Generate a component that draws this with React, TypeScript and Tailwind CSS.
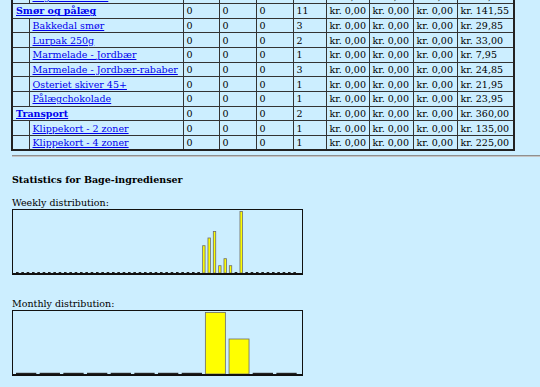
import React from "react"

type Row = {
  name: string
  cat?: boolean
  counts: number[]
  total: string
}

const rows: Row[] = [
  { name: "Yoghurt naturel", counts: [0, 0, 0, 1], total: "kr. 12,95" },
  { name: "Smør og pålæg", cat: true, counts: [0, 0, 0, 11], total: "kr. 141,55" },
  { name: "Bakkedal smør", counts: [0, 0, 0, 3], total: "kr. 29,85" },
  { name: "Lurpak 250g", counts: [0, 0, 0, 2], total: "kr. 33,00" },
  { name: "Marmelade - Jordbær", counts: [0, 0, 0, 1], total: "kr. 7,95" },
  { name: "Marmelade - Jordbær-rababer", counts: [0, 0, 0, 3], total: "kr. 24,85" },
  { name: "Osteriet skiver 45+", counts: [0, 0, 0, 1], total: "kr. 21,95" },
  { name: "Pålægchokolade", counts: [0, 0, 0, 1], total: "kr. 23,95" },
  { name: "Transport", cat: true, counts: [0, 0, 0, 2], total: "kr. 360,00" },
  { name: "Klippekort - 2 zoner", counts: [0, 0, 0, 1], total: "kr. 135,00" },
  { name: "Klippekort - 4 zoner", counts: [0, 0, 0, 1], total: "kr. 225,00" },
]

// weekly values as bar heights in px (index = week)
const weekly: Record<number, number> = { 35: 27.3, 36: 35, 37: 41.6, 38: 7.3, 39: 14.3, 40: 7.3, 42: 61.6 }
const monthly: Record<number, number> = { 8: 61.6, 9: 35 }

const cell = "border border-[#333] h-[14.67px] py-0 pl-[3px] pr-[2px] align-middle whitespace-nowrap"

function WeeklyChart() {
  return (
    <div className="w-[291px] h-[66px] border border-b-2 border-[#111]">
      <svg width="289" height="63" viewBox="0 0 289 63">
        {Array.from({ length: 53 }).map((_, i) => {
          const h = weekly[i] ?? 0
          const x = 3 + i * 5.333
          return h > 0 ? (
            <rect key={i} x={x} y={63 - h} width={2.4} height={h} fill="#ffff00" stroke="#6b6b6b" strokeWidth={0.8} />
          ) : (
            <rect key={i} x={x} y={62} width={2.6} height={1} fill="#222" />
          )
        })}
      </svg>
    </div>
  )
}

function MonthlyChart() {
  return (
    <div className="w-[291px] h-[66px] border border-b-2 border-[#111]">
      <svg width="289" height="63" viewBox="0 0 289 63">
        {Array.from({ length: 12 }).map((_, i) => {
          const h = monthly[i] ?? 0
          const x = 3 + i * 23.67
          return h > 0 ? (
            <rect key={i} x={x} y={63 - h} width={20} height={h} fill="#ffff00" stroke="#6b6b6b" strokeWidth={0.8} />
          ) : (
            <rect key={i} x={x} y={61.8} width={20.3} height={1.2} fill="#222" />
          )
        })}
      </svg>
    </div>
  )
}

export default function App() {
  return (
    <div className="w-[540px] h-[387px] overflow-hidden bg-[#cceeff] text-black text-[9.5px] leading-[11px] font-['DejaVu_Serif',serif]">
      <div className="pl-[12px]">
        <table className="-mt-[12px] -ml-[1px] w-[502px] table-fixed border-collapse border-2 border-[#222]">
          <colgroup>
            <col className="w-[17px]" />
            <col className="w-[154px]" />
            <col className="w-[36px]" />
            <col className="w-[37px]" />
            <col className="w-[37px]" />
            <col className="w-[33px]" />
            <col className="w-[43px]" />
            <col className="w-[44px]" />
            <col className="w-[44px]" />
            <col className="w-[57px]" />
          </colgroup>
          <tbody>
            {rows.map((r) => (
              <tr key={r.name}>
                {r.cat ? (
                  <td colSpan={2} className={cell}>
                    <a href="#" className="font-bold text-[#0000ee] underline">{r.name}</a>
                  </td>
                ) : (
                  <>
                    <td className={cell}></td>
                    <td className={cell}>
                      <a href="#" className="text-[#0000ee] underline">{r.name}</a>
                    </td>
                  </>
                )}
                {r.counts.map((c, i) => (
                  <td key={i} className={cell}>{c}</td>
                ))}
                <td className={cell}>kr. 0,00</td>
                <td className={cell}>kr. 0,00</td>
                <td className={cell}>kr. 0,00</td>
                <td className={cell}>{r.total}</td>
              </tr>
            ))}
          </tbody>
        </table>

        <div className="mt-[4px] h-[2px] border-t border-b border-t-[#8f8f8f] border-b-[#c4c4c4]" />

        <h3 className="mt-[17px] font-bold">Statistics for Bage-ingredienser</h3>

        <div className="mt-[12px]">Weekly distribution:</div>
        <div className="mt-[1px]">
          <WeeklyChart />
        </div>

        <div className="mt-[23px]">Monthly distribution:</div>
        <div className="mt-[1px]">
          <MonthlyChart />
        </div>
      </div>
    </div>
  )
}
